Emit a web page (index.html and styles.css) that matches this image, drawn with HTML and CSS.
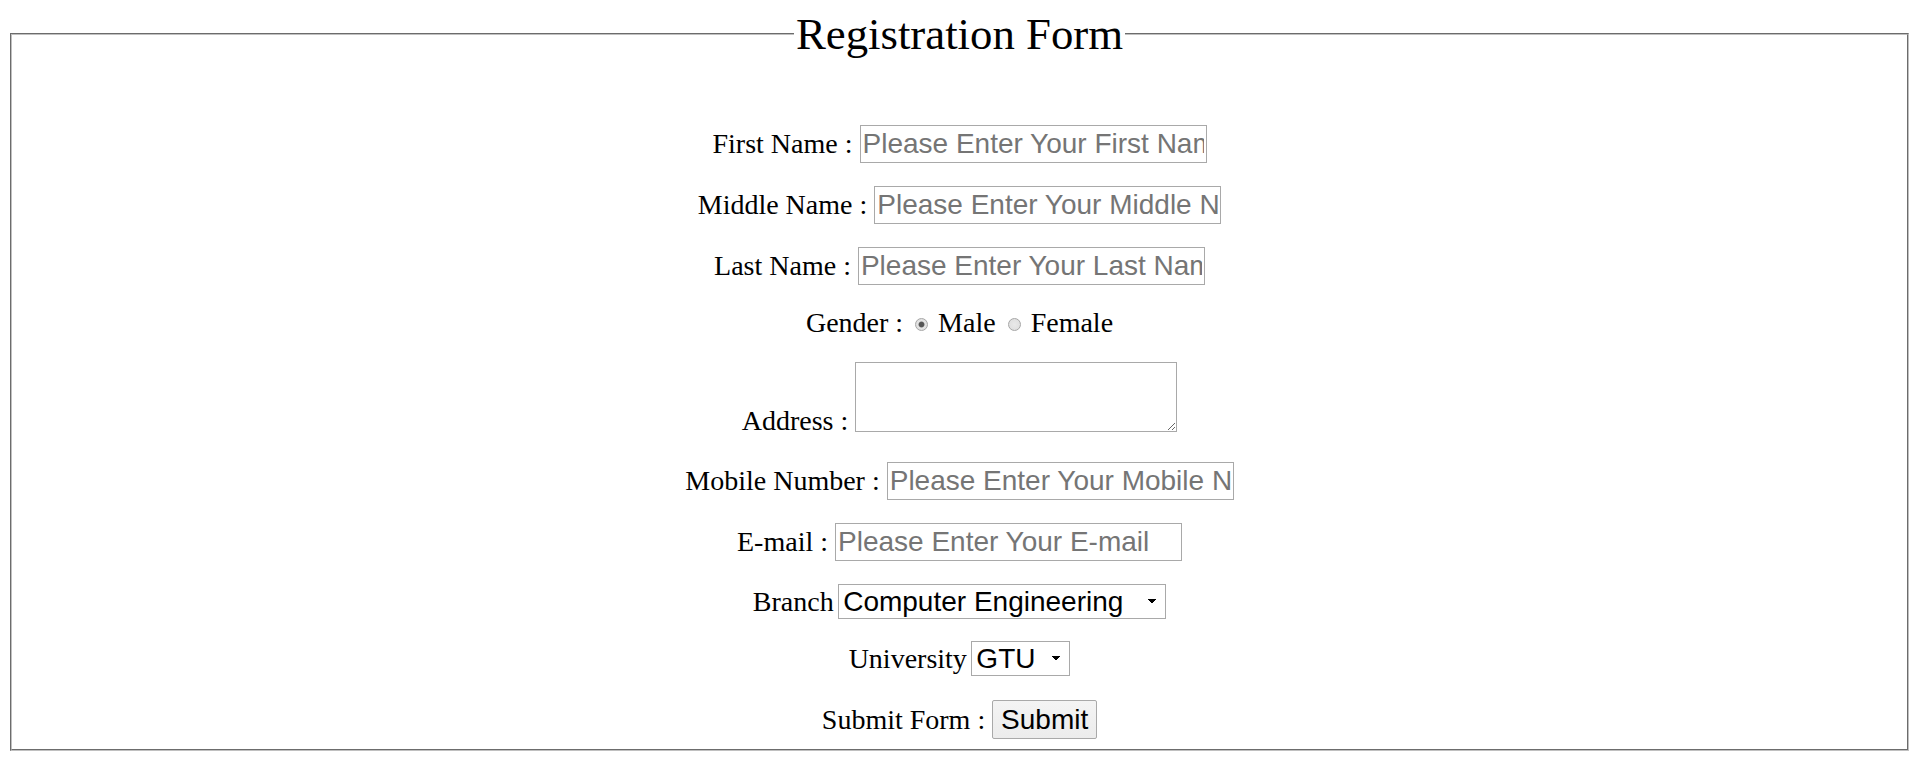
FILE: index.html
```html
<!DOCTYPE html>
<html lang="en">
<head>
<meta charset="utf-8">
<title>Registration Form</title>
<link rel="stylesheet" href="styles.css">
</head>
<body>
<fieldset class="frame">
  <legend class="title">Registration Form</legend>
  <form class="form">
    <div class="row"><label class="lbl">First Name :</label> <input class="field" type="text" placeholder="Please Enter Your First Name"></div>
    <div class="row"><label class="lbl">Middle Name :</label> <input class="field" type="text" placeholder="Please Enter Your Middle Name"></div>
    <div class="row"><label class="lbl">Last Name :</label> <input class="field" type="text" placeholder="Please Enter Your Last Name"></div>
    <div class="row row-gender"><span class="lbl">Gender :</span> <input class="radio" type="radio" name="gender" checked> Male <input class="radio" type="radio" name="gender"> Female</div>
    <div class="row row-address"><label class="lbl">Address :</label><textarea class="area"></textarea></div>
    <div class="row row-mobile"><label class="lbl">Mobile Number :</label> <input class="field" type="text" placeholder="Please Enter Your Mobile Number"></div>
    <div class="row"><label class="lbl">E-mail :</label> <input class="field" type="text" placeholder="Please Enter Your E-mail"></div>
    <div class="row"><label class="lbl">Branch</label><select class="pick pick-wide"><option>Computer Engineering</option><option>Information Technology</option><option>Mechanical Engineering</option></select></div>
    <div class="row row-univ"><label class="lbl">University</label><select class="pick pick-narrow"><option>GTU</option></select></div>
    <div class="row row-submit"><span class="lbl">Submit Form :</span> <button class="btn" type="button">Submit</button></div>
  </form>
</fieldset>
</body>
</html>
```
FILE: styles.css
```css
html, body {
  background: #ffffff;
}

body {
  margin: 8px;
  font-family: "Liberation Serif", "Times New Roman", serif;
  color: #000000;
}

.frame {
  margin: 0 2px;
  padding: 0 12px 10px;
  border: 2px groove #c0c0c0;
  min-width: 0;
}

.title {
  margin: 0 auto;
  padding: 0 2px;
  font-size: 44.8px;
  line-height: normal;
}

.form {
  margin: 0;
  padding-top: 64.5px;
}

.row {
  text-align: center;
  font-size: 28px;
  line-height: normal;
  white-space: nowrap;
}

.row + .row {
  margin-top: 23px;
}

.row.row-gender {
  margin-top: 22.5px;
}

.row.row-address {
  display: flex;
  justify-content: center;
  align-items: flex-end;
  gap: 7px;
  margin-top: 23.3px;
}

.row.row-mobile {
  margin-top: 25.4px;
}

.row.row-univ {
  margin-top: 22px;
}

.row.row-submit {
  margin-top: 24px;
}

.field {
  box-sizing: border-box;
  width: 347px;
  height: 38px;
  margin: 0;
  padding: 1px 2px;
  border: 1px solid #a9a9a9;
  border-radius: 0;
  background: #ffffff;
  font-family: "Liberation Sans", Arial, sans-serif;
  font-size: 28px;
  color: #000000;
  outline: none;
}

.field::placeholder {
  color: #757575;
  opacity: 1;
}

.radio {
  appearance: none;
  -webkit-appearance: none;
  box-sizing: border-box;
  width: 13px;
  height: 13px;
  margin: 3px 3px 1px 5px;
  border: 1px solid #a6a6a6;
  border-radius: 50%;
  background: radial-gradient(circle at 50% 50%, #e9e9e9 0, #dcdcdc 100%);
  vertical-align: baseline;
}

.radio:checked {
  background: radial-gradient(circle at 50% 50%, #555555 0, #555555 2.2px, #8a8a8a 2.8px, #e4e4e4 3.4px, #dadada 100%);
}

.area {
  box-sizing: border-box;
  width: 322px;
  height: 70px;
  margin: 0 0 4.6px;
  padding: 2px;
  border: 1px solid #a9a9a9;
  border-radius: 0;
  background: #ffffff;
  font-family: "Liberation Mono", monospace;
  font-size: 13px;
  outline: none;
}

.pick {
  appearance: none;
  -webkit-appearance: none;
  box-sizing: border-box;
  height: 35px;
  margin: 0 0 0 4.5px;
  padding: 0 20px 0 4px;
  border: 1px solid #a9a9a9;
  border-radius: 0;
  background-color: #ffffff;
  background-image: linear-gradient(to bottom left, #000000 50%, transparent 50%), linear-gradient(to bottom right, #000000 50%, transparent 50%);
  background-size: 4px 5px, 4px 5px;
  background-position: right 13px center, right 9px center;
  background-repeat: no-repeat;
  font-family: "Liberation Sans", Arial, sans-serif;
  font-size: 28px;
  color: #000000;
  outline: none;
}

.pick-wide {
  width: 328px;
}

.pick-narrow {
  width: 99px;
}

.btn {
  box-sizing: border-box;
  width: 105px;
  height: 39px;
  margin: 0;
  padding: 1px 6px;
  border: 1px solid #a9a9a9;
  border-radius: 2px;
  background: linear-gradient(#f4f4f4, #ececec);
  font-family: "Liberation Sans", Arial, sans-serif;
  font-size: 28px;
  color: #000000;
}
```
